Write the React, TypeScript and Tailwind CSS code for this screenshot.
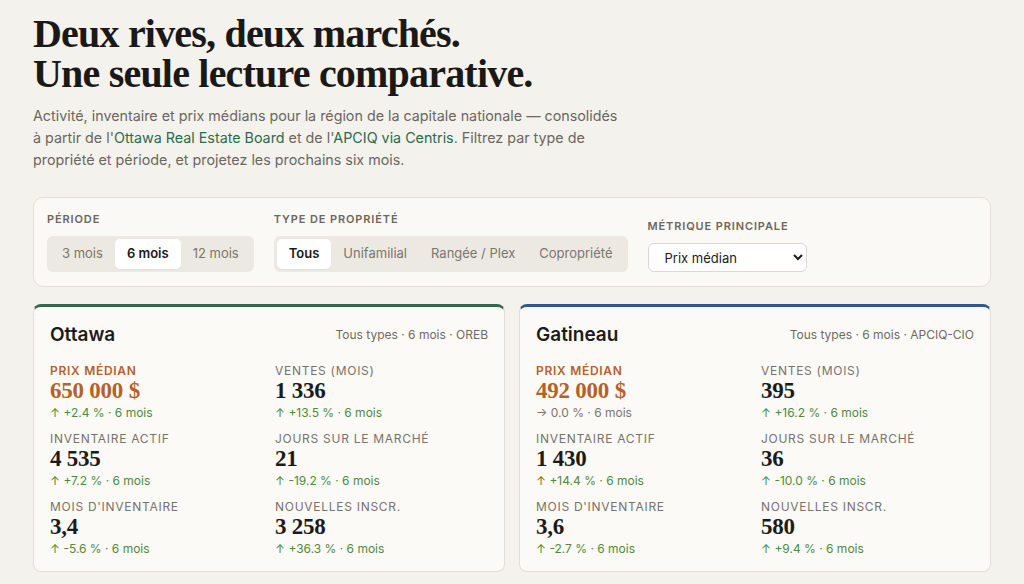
import { useState } from "react";

type Metric = {
  label: string;
  value: string;
  delta: string;
  trend: "up" | "flat";
  primary?: boolean;
};

type Market = {
  city: string;
  meta: string;
  accent: string;
  metrics: Metric[];
};

const markets: Market[] = [
  {
    city: "Ottawa",
    meta: "Tous types · 6 mois · OREB",
    accent: "border-t-[#2f6a4e]",
    metrics: [
      { label: "Prix médian", value: "650 000 $", delta: "+2.4 %", trend: "up", primary: true },
      { label: "Ventes (mois)", value: "1 336", delta: "+13.5 %", trend: "up" },
      { label: "Inventaire actif", value: "4 535", delta: "+7.2 %", trend: "up" },
      { label: "Jours sur le marché", value: "21", delta: "-19.2 %", trend: "up" },
      { label: "Mois d'inventaire", value: "3,4", delta: "-5.6 %", trend: "up" },
      { label: "Nouvelles inscr.", value: "3 258", delta: "+36.3 %", trend: "up" },
    ],
  },
  {
    city: "Gatineau",
    meta: "Tous types · 6 mois · APCIQ-CIO",
    accent: "border-t-[#2c5a8c]",
    metrics: [
      { label: "Prix médian", value: "492 000 $", delta: "0.0 %", trend: "flat", primary: true },
      { label: "Ventes (mois)", value: "395", delta: "+16.2 %", trend: "up" },
      { label: "Inventaire actif", value: "1 430", delta: "+14.4 %", trend: "up" },
      { label: "Jours sur le marché", value: "36", delta: "-10.0 %", trend: "up" },
      { label: "Mois d'inventaire", value: "3,6", delta: "-2.7 %", trend: "up" },
      { label: "Nouvelles inscr.", value: "580", delta: "+9.4 %", trend: "up" },
    ],
  },
];

const periods = ["3 mois", "6 mois", "12 mois"];
const types = ["Tous", "Unifamilial", "Rangée / Plex", "Copropriété"];

function Segmented({
  options,
  value,
  onChange,
}: {
  options: string[];
  value: string;
  onChange: (v: string) => void;
}) {
  return (
    <div className="flex rounded-md bg-[#ece9e2] p-[3px]">
      {options.map((opt) => (
        <button
          key={opt}
          onClick={() => onChange(opt)}
          className={
            opt === value
              ? "h-[30px] rounded-[5px] bg-white px-3 text-[13px] font-semibold text-[#1b1a17] shadow-[0_1px_1px_rgba(0,0,0,0.04)]"
              : "h-[30px] rounded-[5px] px-3 text-[13px] text-[#7b766d]"
          }
        >
          {opt}
        </button>
      ))}
    </div>
  );
}

function FilterLabel({ children }: { children: React.ReactNode }) {
  return (
    <div className="mb-[9px] text-[11px] font-semibold uppercase leading-4 tracking-[0.08em] text-[#6d665b]">
      {children}
    </div>
  );
}

function MetricCell({ m }: { m: Metric }) {
  return (
    <div>
      <div
        className={
          m.primary
            ? "text-[12px] font-semibold uppercase leading-4 tracking-[0.06em] text-[#b5612a]"
            : "text-[12px] uppercase leading-4 tracking-[0.06em] text-[#77726a]"
        }
      >
        {m.label}
      </div>
      <div
        className={
          "font-['Liberation_Serif',serif] text-[23px] font-bold leading-6 tracking-[-0.01em] " +
          (m.primary ? "text-[#b5612a]" : "text-[#1c1b19]")
        }
      >
        {m.value}
      </div>
      <div
        className={
          "mt-0.5 text-[12px] leading-4 " +
          (m.trend === "up" ? "text-[#4f8a3a]" : "text-[#7a756c]")
        }
      >
        {m.trend === "up" ? "↑" : "→"} {m.delta} · 6 mois
      </div>
    </div>
  );
}

function MarketCard({ market }: { market: Market }) {
  return (
    <div
      className={
        "rounded-lg border border-[#e2ded5] border-t-[3px] bg-[#fbfaf7] px-4 pb-[14px] pt-[16px] " +
        market.accent
      }
    >
      <div className="flex items-center justify-between">
        <h2 className="text-[19px] font-semibold leading-6 text-[#1c1b19]">{market.city}</h2>
        <span className="text-[12px] text-[#6f6a62]">{market.meta}</span>
      </div>
      <div className="mt-4 grid grid-cols-2 gap-x-3 gap-y-[10px]">
        {market.metrics.map((m) => (
          <MetricCell key={m.label} m={m} />
        ))}
      </div>
    </div>
  );
}

export default function App() {
  const [period, setPeriod] = useState("6 mois");
  const [type, setType] = useState("Tous");

  return (
    <div className="min-h-[584px] bg-[#f4f2ed] px-[33px] pt-[14px] font-['Inter','Noto_Sans',sans-serif] text-[#1c1b19]">
      <h1 className="font-['Liberation_Serif',serif] text-[40px] font-bold leading-[40px] tracking-[-0.02em] text-[#1a1917]">
        Deux rives, deux marchés.
        <br />
        Une seule lecture comparative.
      </h1>

      <p className="mt-[11px] max-w-[620px] text-[14.3px] leading-[22px] text-[#6b6760]">
        Activité, inventaire et prix médians pour la région de la capitale nationale — consolidés
        <br />à partir de l'<span className="text-[#2e6a4c]">Ottawa Real Estate Board</span> et de l'
        <span className="text-[#2e6a4c]">APCIQ via Centris</span>. Filtrez par type de
        <br />
        propriété et période, et projetez les prochains six mois.
      </p>

      <div className="mt-[26px] flex items-end gap-5 rounded-[10px] border border-[#e4e0d7] bg-[#faf9f6] px-[13px] pb-[14px] pt-[13px]">
        <div>
          <FilterLabel>Période</FilterLabel>
          <Segmented options={periods} value={period} onChange={setPeriod} />
        </div>
        <div>
          <FilterLabel>Type de propriété</FilterLabel>
          <Segmented options={types} value={type} onChange={setType} />
        </div>
        <div>
          <FilterLabel>Métrique principale</FilterLabel>
          <select className="h-[29px] w-[159px] rounded-md border border-[#dcd8cf] bg-white px-3 text-[13px] text-[#1c1b19]">
            <option>Prix médian</option>
            <option>Ventes</option>
            <option>Inventaire actif</option>
          </select>
        </div>
      </div>

      <div className="mt-[17px] grid grid-cols-2 gap-[14px]">
        {markets.map((m) => (
          <MarketCard key={m.city} market={m} />
        ))}
      </div>
    </div>
  );
}
